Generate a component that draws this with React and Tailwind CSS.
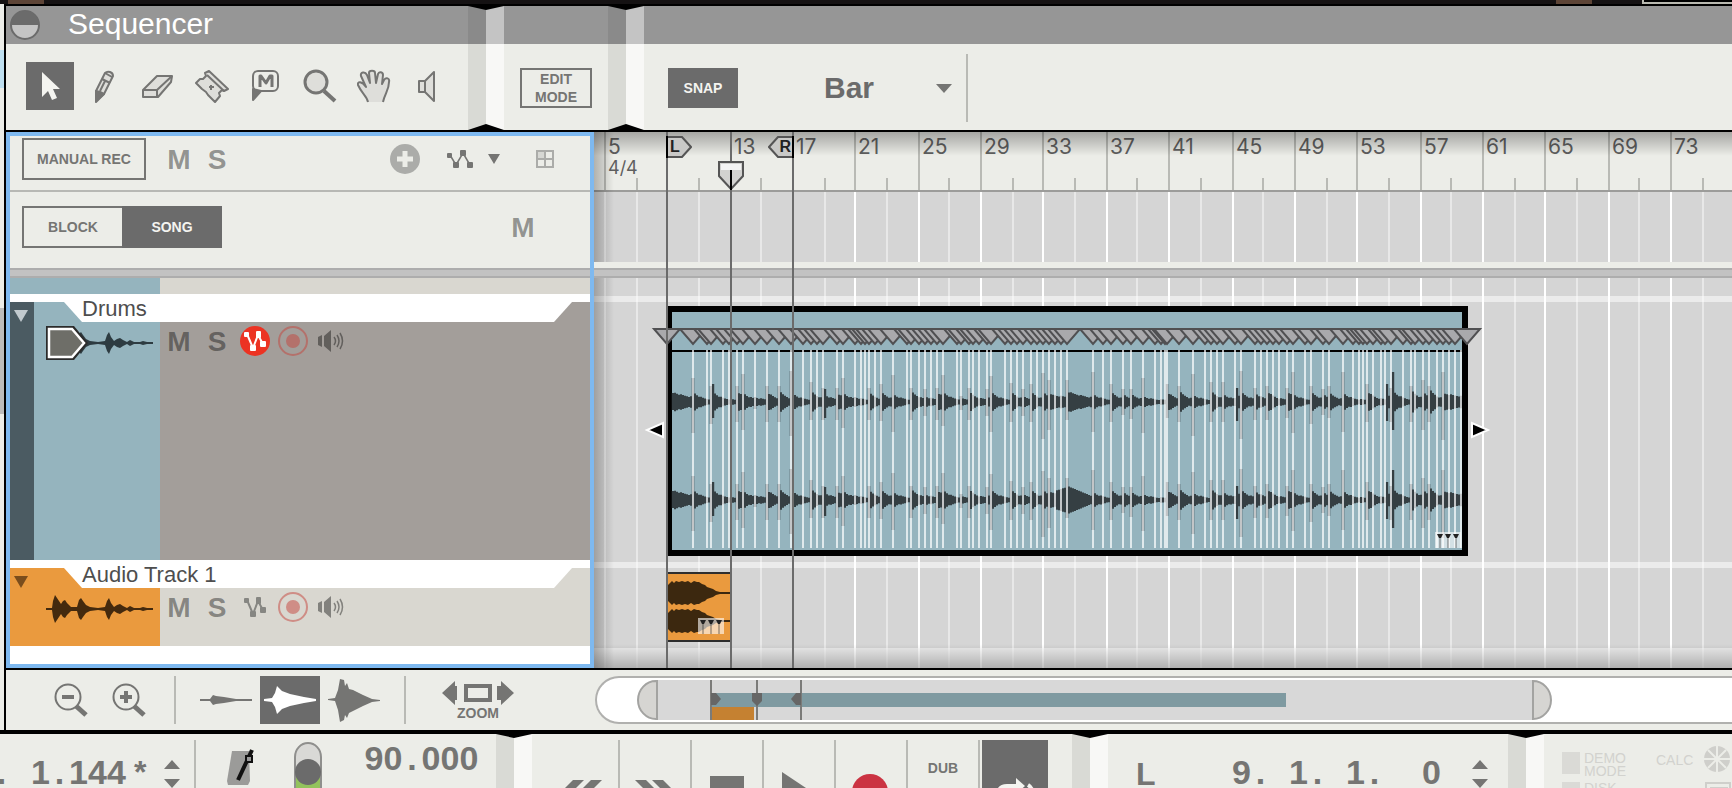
import { useState } from 'react';
import clsx from 'clsx';

// slice positions inside the Drums clip, px from its left edge
const SLICES = [
  25, 39, 43, 55, 61, 69, 75, 87, 99, 111, 123, 135, 143, 149, 155, 169, 175, 187, 193, 197, 201, 207, 213, 225,
  239, 243, 251, 257, 263, 269, 275, 289, 293, 301, 305, 311, 319, 323, 337, 343, 349, 355, 363, 369, 375, 381,
  387, 393, 399, 425, 435, 443, 455, 463, 475, 487, 493, 497, 499, 511, 525, 537, 543, 549, 555, 567, 573, 587,
  593, 599, 605, 611, 619, 625, 637, 643, 655, 661, 675, 685, 691, 695, 699, 705, 713, 717, 723, 735, 743, 747,
  755, 761, 769, 775, 781, 787, 793,
];

// [x, peak up, peak down, body, decay]
const HITS = [
  [5, 9, 8, 9, 20], [25, 24, 31, 9], [43, 16, 22, 5], [45, 18, 16, 9], [69, 16, 20, 10], [75, 28, 28, 8], [87, 5, 7, 4],
  [99, 16, 20, 9], [111, 16, 20, 10], [123, 31, 34, 9], [143, 20, 18, 10], [155, 14, 18, 5], [157, 13, 16, 6],
  [169, 14, 18, 8], [175, 24, 26, 8], [187, 5, 5, 4], [201, 14, 18, 8], [213, 18, 19, 9], [225, 27, 30, 7],
  [243, 14, 18, 10], [257, 13, 14, 5], [269, 14, 18, 9], [275, 27, 24, 9], [293, 6, 8, 3], [301, 14, 18, 9],
  [319, 13, 14, 5], [323, 26, 30, 9], [343, 19, 20, 9], [355, 13, 14, 5], [363, 18, 20, 9], [375, 29, 37, 9],
  [381, 22, 28, 7, 30], [399, 22, 18, 10, 20], [425, 30, 30, 7], [443, 18, 20, 9], [455, 13, 13, 7], [463, 13, 17, 7],
  [475, 24, 31, 5], [499, 18, 16, 9], [511, 16, 20, 10], [525, 28, 34, 6], [543, 20, 20, 10], [555, 20, 20, 7],
  [567, 4, 4, 4], [569, 14, 19, 7], [573, 31, 37, 9], [587, 14, 18, 8], [599, 16, 18, 10], [619, 14, 16, 10],
  [625, 30, 31, 7], [643, 16, 22, 9], [655, 13, 13, 7], [661, 16, 16, 8], [675, 30, 30, 8], [699, 18, 20, 10],
  [719, 18, 19, 7], [723, 14, 20, 8], [725, 30, 28, 10], [743, 16, 20, 11], [755, 22, 28, 9], [761, 16, 20, 12],
  [775, 30, 38, 8, 30],
];

const BARS = Array.from({ length: 36 }, (_, i) => ({
  x: 2 * Math.round((604 + i * 31.35) / 2) - 594,
  label: i % 2 === 0 ? 5 + i * 2 : null,
}));

function bodyPath(cy, lower) {
  let d = '';
  HITS.forEach(([x, , , body, decay = 7], i) => {
    const end = HITS[i + 1] ? HITS[i + 1][0] : 794;
    for (let p = x + 1; p < end; p += 2) {
      let h = 1.5 + (body - 1.5) * Math.exp(-(p - x) / decay) + ((p * 7) % 5) / 4;
      if (lower && p > 386 && p < 425) h = p < 400 ? 9 + (p - 386) / 3 : 3 + (425 - p) / 2.4;
      d += `M${p} ${cy - h}h2V${cy + h}h-2z`;
    }
  });
  return d;
}

function spikePath(cy, width) {
  return HITS.map(([x, up, down]) => `M${x - width / 2} ${cy - up}h${width}V${cy + down}h-${width}z`).join('');
}

// closed outline mirrored around cy, from [x, amplitude] pairs
function mirrored(points, cy) {
  const top = points.map(([x, a]) => `${x} ${cy - a}`);
  const bottom = points.map(([x, a]) => `${x} ${cy + a}`).reverse();
  return `M${[...top, ...bottom].join('L')}z`;
}

const MINI = [
  [0, 1], [6, 1], [7, 8], [9, 14], [11, 11], [13, 8], [15, 5], [17, 8], [19, 9], [21, 6], [25, 2], [31, 2], [33, 9], [35, 11],
  [37, 8], [40, 4], [44, 2], [52, 1], [59, 2], [61, 8], [63, 11], [65, 6], [68, 2], [71, 4], [74, 5], [77, 3], [81, 1],
  [84, 3], [88, 1], [94, 1], [97, 2], [101, 1], [107, 1],
];

const BLOB = [
  [0, 8], [2, 10], [4, 12], [6, 10], [8, 12], [11, 11], [14, 12], [17, 11], [20, 12], [23, 10], [26, 12], [29, 11], [31, 11],
  [34, 9], [37, 8], [39, 6], [42, 5], [45, 4], [48, 2], [52, 1], [62, 1],
];

/* ---------- small shared pieces ---------- */

function Ridge({ titled, bottom }) {
  return (
    <div className="relative flex w-9 shrink-0 flex-col bg-[#ecede8]">
      {titled && <div className="h-[38px] bg-[#969696]" />}
      <div className="absolute inset-0 flex">
        <div className="flex-1 bg-black/8" />
        <div className="flex flex-1 flex-col">
          {titled && <div className="h-[38px] bg-[#c4c4c4]" />}
          <div className="flex-1 bg-[#f8f8f6]" />
        </div>
      </div>
      <div className="absolute inset-x-0 top-0 h-1 bg-black [clip-path:polygon(0_0,100%_0,50%_100%)]" />
      {bottom && <div className="absolute inset-x-0 bottom-0 h-1.5 bg-black [clip-path:polygon(0_100%,100%_100%,50%_0)]" />}
    </div>
  );
}

function Panel({ title, className, bodyClass, children }) {
  return (
    <section className={clsx('flex flex-col bg-[#ecede8]', className)}>
      <div className="flex h-[38px] items-center bg-[#969696]">{title}</div>
      <div className={clsx('flex h-[86px]', bodyClass)}>{children}</div>
    </section>
  );
}

function LetterButton({ children, label }) {
  return (
    <button aria-label={label} className="w-[38px] shrink-0 pt-0.5 text-center text-[28px] leading-8 font-bold text-black/40">
      {children}
    </button>
  );
}

function Readout({ value, className }) {
  return (
    <span className={clsx('flex text-[34px] leading-6 font-bold text-[#757573]', className)}>
      {value.split('').map((c, i) => (
        <span key={i} className="w-[19px] shrink-0 text-center whitespace-pre">{c}</span>
      ))}
    </span>
  );
}

function Spinner({ label }) {
  return (
    <button aria-label={label} className="shrink-0">
      <svg width="16" height="28" viewBox="0 0 16 28" fill="#757573">
        <path d="M8 0l8 9H0zM8 28l8-9H0z" />
      </svg>
    </button>
  );
}

function Down({ className, w = 16, h = 9 }) {
  return (
    <svg className={className} width={w} height={h} viewBox="0 0 16 9" preserveAspectRatio="none" fill="currentColor">
      <path d="M0 0h16L8 9z" />
    </svg>
  );
}

function Automation() {
  return (
    <svg width="28" height="20" viewBox="0 0 28 20" fill="currentColor">
      <path d="M4 6l6 10 7-12 7 12" fill="none" stroke="currentColor" strokeWidth="1.5" />
      <rect x="1" y="4" width="5" height="5" rx="1" />
      <rect x="7" y="13" width="6" height="6" rx="1" />
      <rect x="14" y="1" width="6" height="6" rx="1" />
      <rect x="21" y="13" width="6" height="6" rx="1" />
    </svg>
  );
}

function AutomationSmall() {
  return (
    <svg width="22" height="20" viewBox="0 0 22 20" fill="currentColor">
      <path d="M3 3l6 14 5-13 5 9" fill="none" stroke="currentColor" strokeWidth="2" />
      <rect x="0" y="1" width="5" height="5" rx="1" />
      <rect x="6" y="14" width="6" height="6" rx="1" />
      <rect x="12" y="0" width="5" height="7" rx="1" />
      <rect x="16" y="10" width="6" height="6" rx="1" />
    </svg>
  );
}

/* ---------- tool icons ---------- */

const TOOLS = [
  { name: 'Selection', icon: <path d="M9 3v25l6-6 4 9 5-2-4-9h7z" fill="#f4f4f0" stroke="none" /> },
  {
    name: 'Pencil',
    icon: (
      <>
        <path d="M9 22L18 4q2-2 5-1t3 4L17 25l-8 7z" fill="#dededa" />
        <path d="M9 22l4 1 4 2-8 8z" fill="#757573" />
        <path d="M15 10l8 4M18 12l-5 10M18 4l7 4" />
      </>
    ),
  },
  {
    name: 'Eraser',
    icon: (
      <>
        <path d="M2 21L16 7h15l-1 6-13 15H2z" fill="#dededa" />
        <path d="M2 21h14l15-14M16 21v7" />
      </>
    ),
  },
  {
    name: 'Razor',
    icon: (
      <>
        <path d="M14 2l19 18-4 2-2-1-3 3 1 3-5 6-7-7-2-3-4-3-6-6 4-4 3 0 3-3-1-3z" fill="#dededa" />
        <path d="M12 6l17 16M14 18h5M16 16v5" />
      </>
    ),
  },
  {
    name: 'Mute',
    icon: (
      <>
        <rect x="4" y="2" width="25" height="20" rx="5" />
        <path d="M4 20v11l8-9z" fill="#757573" />
        <path d="M11 18V7h1l5 7 4-7h2v11" strokeWidth="3" />
      </>
    ),
  },
  {
    name: 'Magnify',
    icon: (
      <>
        <circle cx="13" cy="13" r="11" fill="#dededa" strokeWidth="3" />
        <path d="M21 22l11 10" strokeWidth="4" />
      </>
    ),
  },
  {
    name: 'Hand',
    icon: (
      <path
        d="M11 33C10 27 5 25 1 16C0 12 5 12 9 18L4 7C3 3 8 2 10 6L13 14L12 4C12 1 18 1 18 4L19 14L21 5C22 2 26 3 26 6L25 15L27 11C29 8 33 9 32 13C32 21 28 24 26 33"
        fill="#dededa"
      />
    ),
  },
  {
    name: 'Speaker',
    icon: (
      <>
        <rect x="8" y="12" width="6" height="11" fill="#dededa" />
        <path d="M14 12l9-9v29l-9-9z" fill="#dededa" />
      </>
    ),
  },
];

function Toolbar() {
  const [tool, setTool] = useState('Selection');
  const [snap, setSnap] = useState('Bar');

  return (
    <header className="flex border-b-2 border-black">
      <Panel
        className="w-[462px] shrink-0"
        bodyClass="items-start gap-1.5 pt-[18px] pl-5"
        title={
          <>
            <button aria-label="Fold sequencer" className="ml-1">
              <svg width="30" height="30" viewBox="0 0 30 30">
                <circle cx="15" cy="15" r="14" fill="#c4c4c4" stroke="#6b6b6b" strokeWidth="2" />
                <path d="M1 15a14 14 0 0 1 28 0z" fill="#6b6b6b" />
              </svg>
            </button>
            <h1 className="ml-7 pb-0.5 text-[30px] leading-8 text-white">Sequencer</h1>
          </>
        }
      >
        {TOOLS.map(t => (
          <button
            key={t.name}
            aria-label={t.name}
            onClick={() => setTool(t.name)}
            className={clsx('flex size-12 shrink-0 items-center justify-center', tool === t.name && 'bg-[#6b6b6b]')}
          >
            <svg width="35" height="35" viewBox="0 0 35 35" fill="none" stroke="#757573" strokeWidth="2" strokeLinejoin="round">
              {t.icon}
            </svg>
          </button>
        ))}
      </Panel>
      <Ridge titled bottom />
      <Panel className="w-[104px] shrink-0" bodyClass="items-start pt-6 pl-4">
        <button className="h-10 w-[72px] border-2 border-[#757573] text-sm leading-[18px] font-bold text-[#757573]">
          EDIT
          <br />
          MODE
        </button>
      </Panel>
      <Ridge titled bottom />
      <Panel className="min-w-0 flex-1" bodyClass="items-start pl-6">
        <button className="mt-6 h-10 w-[70px] bg-[#6b6b6b] text-sm font-bold text-[#f4f4f0]">SNAP</button>
        <div className="relative mt-2.5 ml-[86px] flex h-[68px] w-[144px] items-center border-r-2 border-[#b9bab5]">
          <select
            aria-label="Snap value"
            value={snap}
            onChange={e => setSnap(e.target.value)}
            className="h-12 w-full appearance-none bg-transparent text-[30px] leading-10 font-bold text-[#6b6b6b]"
          >
            <option>Bar</option>
            <option>1/2</option>
            <option>1/4</option>
          </select>
          <Down className="pointer-events-none absolute right-3.5 text-[#757573]" />
        </div>
      </Panel>
    </header>
  );
}

/* ---------- track list ---------- */

function MiniWave({ color }) {
  return (
    <svg className="block" width="107" height="32" viewBox="0 0 107 32" fill={color}>
      <path d={mirrored(MINI, 17)} />
    </svg>
  );
}

function TrackButtons({ armed }) {
  return (
    <div className="flex items-center">
      <LetterButton label="Mute track">M</LetterButton>
      <LetterButton label="Solo track">S</LetterButton>
      <button aria-label="Automation record" className="flex w-[38px] justify-center">
        <span className={clsx('flex size-[30px] items-center justify-center rounded-full', armed ? 'bg-[#ec3323] text-white' : 'text-[#868682]')}>
          <AutomationSmall />
        </span>
      </button>
      <button aria-label="Record enable" className="flex w-[38px] justify-center">
        <svg width="32" height="32" viewBox="0 0 32 32">
          <circle cx="16" cy="16" r="14" fill="none" stroke="#c6443c" strokeOpacity=".5" strokeWidth="2" />
          <circle cx="16" cy="16" r="7" fill="#c6443c" fillOpacity=".5" />
        </svg>
      </button>
      <button aria-label="Monitor" className="flex w-[38px] justify-center text-black/40">
        <svg width="26" height="22" viewBox="0 0 26 22" fill="currentColor">
          <path d="M0 7l4-2v12l-4-2zM6 6l7-6v22l-7-6z" />
          <path d="M16 7q3 4 0 8M19 5q4 6 0 12M22 3q5 8 0 16" fill="none" stroke="currentColor" strokeWidth="1.5" />
        </svg>
      </button>
    </div>
  );
}

function Track({ name, height, strip, swatch, lane, fold, armed, children }) {
  return (
    <div className={clsx('relative flex', height)}>
      <div className={clsx('w-6 shrink-0 pt-2 pl-1', strip, fold)}>
        <button aria-label={`Fold ${name}`} className="block">
          <Down w={14} h={12} />
        </button>
      </div>
      <div className={clsx('w-[126px] shrink-0 pt-6 pl-3', swatch)}>{children}</div>
      <div className={clsx('flex-1 pt-[22px]', lane)}>
        <TrackButtons armed={armed} />
      </div>
      {/* name tab overlaps both the swatch and the lane */}
      <div className="absolute top-0 right-[18px] left-[54px] h-5 bg-white [clip-path:polygon(0_0,100%_0,calc(100%-18px)_100%,18px_100%)]" />
      <h2 className="absolute -top-[5px] left-[72px] text-[22px] leading-6 text-[#4e4e4e]">{name}</h2>
    </div>
  );
}

function TrackList() {
  return (
    <div className="flex w-[588px] shrink-0 flex-col border-4 border-[#7eb9f0] bg-white">
      <div className="flex h-14 items-start border-b-2 border-[#b7b8b4] bg-[#ecede8] pt-0.5 pl-3">
        <button className="h-[42px] w-[124px] border-2 border-[#757573] text-sm font-bold text-[#757573]">MANUAL REC</button>
        <div className="ml-3.5 flex h-[42px] items-center">
          <LetterButton label="Mute all">M</LetterButton>
          <LetterButton label="Solo all">S</LetterButton>
        </div>
        <div className="ml-[154px] flex h-[42px] items-center text-[#757573]">
          <button aria-label="Add lane">
            <svg width="30" height="30" viewBox="0 0 30 30">
              <circle cx="15" cy="15" r="15" fill="#abaca9" />
              <path d="M15 7v16M7 15h16" stroke="#ecede8" strokeWidth="5" />
            </svg>
          </button>
          <button aria-label="Track parameter automation" className="ml-[26px] flex items-center">
            <Automation />
            <Down className="ml-3.5" w={12} h={10} />
          </button>
          <button aria-label="Grid view" className="ml-9">
            <svg width="18" height="18" viewBox="0 0 18 18" stroke="#abaca9" strokeWidth="2" fill="none">
              <rect x="1" y="1" width="8" height="8" fill="#d6d7d3" />
              <path d="M1 1h16v16H1zM9 1v16M1 9h16" />
            </svg>
          </button>
        </div>
      </div>
      <div className="flex h-[76px] items-start bg-[#ecede8] pt-3.5 pl-3">
        <button className="h-[42px] w-[100px] border-2 border-r-0 border-[#757573] text-sm font-bold text-[#757573]">BLOCK</button>
        <button className="h-[42px] w-[100px] bg-[#6b6b6b] text-sm font-bold text-[#f4f4f0]">SONG</button>
        <div className="mt-1 ml-[282px]">
          <LetterButton label="Mute blocks">M</LetterButton>
        </div>
      </div>
      <div className="h-2.5 border-y-2 border-[#adadad] bg-[#c2c2c2]" />
      <div className="mb-2 flex h-4">
        <div className="w-[150px] bg-[#95b4be]" />
        <div className="flex-1 bg-[#d9d7d0]" />
      </div>
      <Track name="Drums" height="h-[258px]" strip="bg-[#4b5b62]" swatch="bg-[#95b4be]" lane="bg-[#a39e9a]" fold="text-[#c2cace]" armed>
        <div className="relative">
          <MiniWave color="#2d3b41" />
          <svg className="absolute top-0 left-0" width="42" height="34" viewBox="0 0 42 34">
            <path d="M0 0h28l14 17-14 17H0z" fill="#2b2b2b" />
            <path d="M3 3h23l12 14-12 14H3z" fill="#6e6e68" stroke="#fff" strokeWidth="2.5" />
          </svg>
        </div>
      </Track>
      <div className="h-2 shrink-0" />
      <Track name="Audio Track 1" height="h-[78px]" strip="bg-[#ea9a3e]" swatch="bg-[#ea9a3e]" lane="bg-[#d9d7d0]" fold="text-[#7a4d1c]">
        <MiniWave color="#442a0e" />
      </Track>
      <div className="h-[18px] shrink-0" />
    </div>
  );
}

/* ---------- arrangement ---------- */

function WarpBadge() {
  return (
    <g>
      <rect width="26" height="16" fill="#fff" fillOpacity=".6" />
      <path d="M2 2h6L6 6H4zM10 2h6l-2 4h-2zM18 2h6l-2 4h-2z" fill="#222" />
      <path d="M5 6v10M13 6v10M21 6v10" stroke="#222" strokeOpacity=".3" strokeWidth="2" />
    </g>
  );
}

function DrumClip() {
  return (
    <svg className="absolute top-[174px] left-[74px] overflow-visible" width="800" height="250" viewBox="0 0 800 250">
      <rect width="800" height="250" fill="#000" />
      <rect x="4" y="6" width="790" height="238" fill="#95b4be" />
      <rect x="4" y="44" width="790" height="2" fill="#000" />
      <g fill="#353f43">
        <path d={spikePath(96, 4)} fillOpacity=".22" />
        <path d={spikePath(194, 4)} fillOpacity=".22" />
        <path d={spikePath(96, 2)} />
        <path d={spikePath(194, 2)} />
        <path d={bodyPath(96)} />
        <path d={bodyPath(194, true)} />
      </g>
      {SLICES.map(x => (
        <rect key={x} x={x - 1} y="44" width="2" height="198" fill="#fff" fillOpacity=".7" />
      ))}
      {[-1, ...SLICES.slice(0, -1), 799].map(x => (
        <path key={x} d={`M${x - 13} 23h26L${x} 38z`} fill="#a9a9ac" stroke="#505052" strokeWidth="2" />
      ))}
      <g transform="translate(767 226)"><WarpBadge /></g>
      <g fill="#000" stroke="#fff" strokeWidth="2">
        <path d="M-5 117v14l-16-7z" />
        <path d="M804 117v14l16-7z" />
      </g>
    </svg>
  );
}

function AudioClip() {
  return (
    <svg className="absolute top-[440px] left-[74px]" width="62" height="70" viewBox="0 0 62 70">
      <rect width="62" height="70" fill="#2e2e2e" />
      <rect y="2" width="62" height="66" fill="#ea9a3e" />
      <g fill="#3c280f">
        <path d={mirrored(BLOB, 21)} />
        <path d={mirrored(BLOB, 49)} />
      </g>
      <g transform="translate(30 46)"><WarpBadge /></g>
    </svg>
  );
}

function Arrangement() {
  return (
    <div className="relative flex min-w-0 flex-1 flex-col overflow-hidden bg-[#d5d5d5]">
      <div className="h-[60px] shrink-0 border-b-2 border-[#9c9c9a] bg-[#ecede8]" />
      <div className="h-[70px] shrink-0" />
      <div className="z-10 h-1.5 shrink-0 bg-[#ecede8]" />
      <div className="z-10 h-2.5 shrink-0 border-y-2 border-[#adadad] bg-[#c2c2c2]" />
      <div className="h-[18px] shrink-0" />
      <div className="h-1.5 shrink-0 bg-[#ebebeb]" />
      <div className="h-[260px] shrink-0" />
      <div className="h-1.5 shrink-0 bg-[#ebebeb]" />
      <div className="h-20 shrink-0" />
      <div className="flex-1 bg-[#ebebeb]" />

      {/* grid and bar numbers */}
      {BARS.map(({ x, label }) => (
        <div key={x} style={{ left: x }} className="absolute inset-y-0 flex flex-col">
          {label ? (
            <div className="h-[58px] border-l-2 border-[#b9bab5] pl-0.5 font-['Inter'] leading-5 text-[#5f5f5f]">
              {label !== 9 && <span className="block pt-[5px] text-[21px] leading-5">{label}</span>}
              {label === 5 && <span className="block text-lg leading-[22px]">4/4</span>}
            </div>
          ) : (
            <div className="mt-[46px] h-3 w-0.5 bg-[#b9bab5]" />
          )}
          <div className={clsx('mt-0.5 w-0.5 flex-1', label > 17 ? 'bg-white' : 'bg-white/45')} />
        </div>
      ))}

      {/* soft edges where the canvas slides under the panels */}
      <div className="absolute inset-x-0 top-0 h-6 bg-linear-to-b from-black/30 to-transparent" />
      <div className="absolute inset-x-0 bottom-0 h-6 bg-linear-to-t from-black/25 to-transparent" />
      <div className="absolute inset-y-0 left-0 w-5 bg-linear-to-r from-black/25 to-transparent" />

      <DrumClip />
      <AudioClip />

      <div className="absolute inset-y-0 left-[72px] z-20 w-0.5 bg-[#6b6b6b]" />
      <div className="absolute inset-y-0 left-[136px] z-20 w-0.5 bg-[#6b6b6b]" />
      <div className="absolute inset-y-0 left-[198px] z-20 w-0.5 bg-[#6b6b6b]" />

      <div className="absolute top-1 left-[72px] z-20">
        <svg width="26" height="22" viewBox="0 0 26 22">
          <path d="M1 1h15l9 10-9 10H1z" fill="#c9c9c7" stroke="#555" strokeWidth="2" />
          <path d="M1 0v22" stroke="#000" strokeWidth="2" />
        </svg>
        <span className="absolute top-0 left-1 text-base leading-[22px] font-bold text-[#222]">L</span>
      </div>
      <div className="absolute top-1 left-[174px] z-20">
        <svg width="26" height="22" viewBox="0 0 26 22">
          <path d="M25 1H10L1 11l9 10h15z" fill="#c9c9c7" stroke="#555" strokeWidth="2" />
          <path d="M25 0v22" stroke="#000" strokeWidth="2" />
        </svg>
        <span className="absolute top-0 right-[3px] text-base leading-[22px] font-bold text-[#222]">R</span>
      </div>
      <svg className="absolute top-7 left-[124px] z-20" width="26" height="30" viewBox="0 0 26 30">
        <path d="M1 2h24v14L13 29 1 16z" fill="#d2d2d0" stroke="#555" strokeWidth="2" />
        <path d="M3 4h20v6H3z" fill="#f4f4f4" />
        <path d="M13 10v20" stroke="#000" strokeWidth="2" />
      </svg>
    </div>
  );
}

/* ---------- bottom bars ---------- */

function ZoomIcon({ plus }) {
  return (
    <svg width="34" height="34" viewBox="0 0 34 34" fill="none" stroke="#757573">
      <circle cx="14" cy="14" r="12.500" strokeWidth="2" />
      <path d="M8 14h12" strokeWidth="4" />
      {plus && <path d="M14 8v12" strokeWidth="4" />}
      <path d="M22 23l10 9" strokeWidth="5" />
    </svg>
  );
}

function ZoomBar() {
  return (
    <div className="flex h-[60px] items-center bg-[#ecede8]">
      <div className="ml-12 flex gap-6">
        <button aria-label="Zoom out"><ZoomIcon /></button>
        <button aria-label="Zoom in"><ZoomIcon plus /></button>
      </div>
      <div className="ml-7 flex h-12 items-center border-x-2 border-[#b9bab5] px-6">
        <button aria-label="Small waveform">
          <svg width="52" height="12" viewBox="0 0 52 12" fill="#757573">
            <path d="M0 5h10l3-4 3 1 8 1 12 2h16v2H36l-12 2-8 1-3 1-3-4H0z" />
          </svg>
        </button>
        <button aria-label="Medium waveform" className="ml-2 flex h-12 w-[60px] items-center justify-center bg-[#6b6b6b]">
          <svg width="52" height="28" viewBox="0 0 52 28" fill="#fff">
            <path d="M0 13l8-1 3-5 2-7 5 5 8 3 14 3 12 2v2l-12 2-14 3-8 3-5 5-2-7-3-5-8-1z" />
          </svg>
        </button>
        <button aria-label="Large waveform" className="ml-2">
          <svg width="52" height="44" viewBox="0 0 52 44" fill="#757573">
            <path d="M0 21l7-1 3-8 2-11 4 1 1 6 2-3 2 6 4 1 10 5 9 4 8 1v1l-8 1-9 4-10 5-4 2-2 5-2-3-1 5-4 2-2-12-3-9-7-1z" />
          </svg>
        </button>
      </div>
      <button className="ml-9 flex flex-col items-center pt-0.5 text-sm leading-4 font-bold text-[#757573]">
        <svg width="72" height="24" viewBox="0 0 72 24" fill="currentColor">
          <path d="M0 12L13 0v5h2v14h-2v5zM72 12L59 0v5h-4v14h4v5z" />
          <path d="M24 5h24v14H24z" fill="none" stroke="currentColor" strokeWidth="4" />
        </svg>
        ZOOM
      </button>
      <div className="ml-[81px] h-12 min-w-0 flex-1 rounded-l-full border-2 border-r-0 border-[#b0b0ae] bg-white py-0.5 pl-10">
        <svg className="block" width="916" height="40" viewBox="0 0 916 40">
          <rect x="21" width="874" height="40" fill="#d8d8d8" />
          <path d="M20 1h-1a18 19 0 0 0 0 38h1z" fill="#d6d5d2" stroke="#a3a3a1" strokeWidth="2" />
          <path d="M896 1a18 19 0 0 1 0 38z" fill="#d6d5d2" stroke="#a3a3a1" strokeWidth="2" />
          <rect x="74" y="13" width="575" height="14" fill="#7f9aa1" />
          <rect x="74" y="27" width="43" height="13" fill="#c58131" />
          <path d="M74 0v40M120 0v40M164 0v40" stroke="#7b7b79" strokeWidth="2" />
          <path d="M74 13h5l5 6-5 6h-5zM164 13h-5l-5 6 5 6h5zM115 13h10v8l-5 5-5-5z" fill="#666" />
        </svg>
      </div>
    </div>
  );
}

const TRANSPORT = [
  { name: 'Rewind', icon: <path d="M25 40h11L20 56H9zM43 40h11L38 56H27z" /> },
  { name: 'Fast forward', icon: <path d="M15 40h11l16 16H31zM32 40h11l16 16H48z" /> },
  { name: 'Stop', icon: <path d="M18 36h34v30H18z" /> },
  { name: 'Play', icon: <path d="M18 32l36 24H18z" /> },
  { name: 'Record', icon: <circle cx="34" cy="52" r="18" fill="#cb3342" /> },
];

function Transport() {
  return (
    <footer className="flex min-h-[54px] flex-1 items-stretch overflow-hidden border-t-4 border-black bg-[#ecede8]">
      <div className="flex w-[496px] shrink-0 items-start">
        <div className="mt-[26px] -ml-2 flex items-start">
          <Readout value="." />
          <Readout value="1.144" className="ml-5" />
          <span className="ml-2 text-[32px] leading-6 font-bold text-[#757573]">*</span>
          <div className="ml-[18px]"><Spinner label="Song position" /></div>
        </div>
        <div className="mt-1.5 ml-3.5 h-12 w-0.5 bg-[#b9bab5]" />
        <button aria-label="Click" className="mt-3.5 ml-[30px]">
          <svg width="30" height="40" viewBox="0 0 30 40">
            <path d="M6 3h17l1 30-2 4H2l-1-4z" fill="#9b9b99" />
            <path d="M12 32L26 2" stroke="#111" strokeWidth="4" />
            <path d="M20 8h6v6h-6z" fill="#999" stroke="#111" strokeWidth="2" />
          </svg>
        </button>
        <button role="switch" aria-checked="true" aria-label="Tempo track" className="mt-2 ml-[38px]">
          <svg width="28" height="46" viewBox="0 0 28 46">
            <path d="M1 60V15a13 14 0 0 1 26 0v45z" fill="#d9d9d6" />
            <path d="M1 32h26v28H1z" fill="#93c35c" />
            <path d="M1 60V15a13 14 0 0 1 26 0v45" fill="none" stroke="#8f8f8d" strokeWidth="2" />
            <circle cx="14" cy="30" r="13" fill="#6b6b6b" />
          </svg>
        </button>
        <Readout value="90.000" className="mt-3 ml-[42px]" />
      </div>
      <Ridge />
      <div className="flex w-[540px] shrink-0 items-start pt-1.5">
        {TRANSPORT.map(({ name, icon }) => (
          <button
            key={name}
            aria-label={name}
            className={clsx('h-16 shrink-0 border-r-2 border-[#b9bab5]', name === 'Rewind' ? 'w-[88px] pl-4' : 'w-[72px]')}
          >
            <svg className="block" width="70" height="64" viewBox="0 0 70 64" fill="#757573">{icon}</svg>
          </button>
        ))}
        <button className="h-16 w-[72px] shrink-0 border-r-2 border-[#b9bab5] pt-5 pb-7 text-sm leading-4 font-bold text-[#757573]">DUB</button>
        <button aria-label="Loop" className="ml-0.5 h-16 w-[66px] shrink-0 bg-[#6b6b6b]">
          <svg className="block" width="66" height="64" viewBox="0 0 66 64" fill="none" stroke="#f4f4f0" strokeWidth="4">
            <path d="M16 56q0-10 9-10h10M46 45q5 3 5 11" />
            <path d="M34 38l9 8-9 8z" fill="#f4f4f0" stroke="none" />
          </svg>
        </button>
      </div>
      <Ridge />
      <div className="flex w-[400px] shrink-0 items-start pt-[26px] pl-7">
        <span className="w-24 pt-0.5 text-[32px] leading-6 font-bold text-[#757573]">L</span>
        <Readout value="9. 1. 1.  0" />
        <div className="ml-[31px]"><Spinner label="Left locator" /></div>
      </div>
      <Ridge />
      <div className="flex min-w-0 flex-1 items-start overflow-hidden pt-[18px] pl-[18px] text-sm leading-[13px] text-[#d2d2ce]">
        <div className="flex shrink-0 flex-col gap-2">
          <span className="h-[22px] w-[18px] bg-[#dadad6]" />
          <span className="h-[22px] w-[18px] bg-[#dadad6]" />
        </div>
        <div className="ml-1 w-[72px] shrink-0">
          <p>DEMO<br />MODE</p>
          <p className="mt-1">DISK</p>
        </div>
        <span className="w-12 shrink-0 pt-0.5">CALC</span>
        <svg className="-mt-3 shrink-0" width="28" height="56" viewBox="0 0 28 56">
          <circle cx="13" cy="19" r="13" fill="#cfcfcb" />
          <path d="M13 6v26M0 19h26M4 10l18 18M22 10L4 28" stroke="#ecede8" strokeWidth="2" />
          <path d="M2 43h24v12H2zM7 48h16v8H7z" fill="none" stroke="#cfcfcb" strokeWidth="2" />
        </svg>
      </div>
    </footer>
  );
}

export default function App() {
  return (
    <div className="flex h-screen flex-col overflow-hidden bg-[#ecede8] font-['Liberation_Sans',sans-serif] select-none">
      <div className="flex h-1 shrink-0 justify-between bg-[#151213]">
        <div className="ml-2 w-9 bg-[#5d4436]" />
        <div className="flex w-[176px]">
          <div className="w-9 bg-[#5d4436]" />
          <div className="ml-[50px] flex-1 border-b-2 border-l-2 border-[#b9b9b0] bg-black" />
        </div>
      </div>
      <div className="flex shrink-0">
        {/* sliver of the window behind */}
        <div className="flex w-1 shrink-0 flex-col">
          <div className="mt-[46px] h-[38px] bg-[#bfe0f0]" />
          <div className="mt-[220px] h-[106px] bg-[#bcbcbc]" />
        </div>
        <main className="min-w-0 flex-1 border-t-2 border-l-2 border-black">
          <Toolbar />
          <div className="flex border-b-2 border-black">
            <TrackList />
            <Arrangement />
          </div>
          <ZoomBar />
        </main>
      </div>
      <Transport />
    </div>
  );
}
